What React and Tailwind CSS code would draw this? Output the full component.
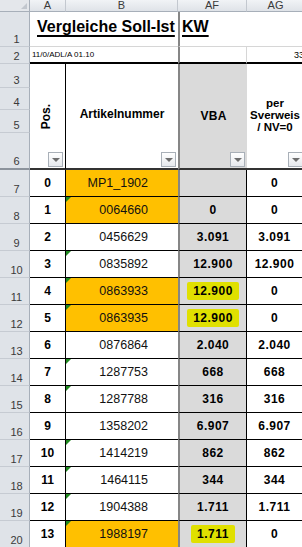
const rows = [
  { pos: '0', art: 'MP1_1902', orange: true, tri: false, vba: '', nv: '0' },
  { pos: '1', art: '0064660', orange: true, tri: true, vba: '0', nv: '0' },
  { pos: '2', art: '0456629', orange: false, tri: false, vba: '3.091', nv: '3.091' },
  { pos: '3', art: '0835892', orange: false, tri: true, vba: '12.900', nv: '12.900' },
  { pos: '4', art: '0863933', orange: true, tri: true, vba: '12.900', nv: '0', mark: true },
  { pos: '5', art: '0863935', orange: true, tri: true, vba: '12.900', nv: '0', mark: true },
  { pos: '6', art: '0876864', orange: false, tri: false, vba: '2.040', nv: '2.040' },
  { pos: '7', art: '1287753', orange: false, tri: true, vba: '668', nv: '668' },
  { pos: '8', art: '1287788', orange: false, tri: true, vba: '316', nv: '316' },
  { pos: '9', art: '1358202', orange: false, tri: false, vba: '6.907', nv: '6.907' },
  { pos: '10', art: '1414219', orange: false, tri: true, vba: '862', nv: '862' },
  { pos: '11', art: '1464115', orange: false, tri: true, vba: '344', nv: '344' },
  { pos: '12', art: '1904388', orange: false, tri: true, vba: '1.711', nv: '1.711' },
  { pos: '13', art: '1988197', orange: true, tri: true, vba: '1.711', nv: '0', mark: true },
]

const rowNums = Array.from({ length: 20 }, (_, i) => i + 1)

function Filter() {
  return (
    <span className="absolute right-[2px] bottom-[1px] w-[15px] h-[15px] border border-[#a9b0b8] bg-linear-to-b from-white to-[#e6e9ed] flex items-center justify-center">
      <span className="w-0 h-0 border-l-[4px] border-r-[4px] border-t-[4px] border-l-transparent border-r-transparent border-t-[#6e6e6e]" />
    </span>
  )
}

function ColHead({ label, className = '' }) {
  return (
    <div className={`bg-linear-to-b from-[#f1f3f6] to-[#dfe3e8] border-r border-b border-r-[#c3c8cf] border-b-[#a7afb9] flex items-center justify-center text-[11px] leading-none text-[#3a3a3a] ${className}`}>
      {label}
    </div>
  )
}

export default function App() {
  return (
    <div className="w-[302px] h-[547px] overflow-hidden bg-white font-['Liberation_Sans',Arial,sans-serif] text-black">
      <div className="grid grid-cols-[30px_36px_112px_69px_58px] grid-rows-[12px_35px_17px_24px_22px_23px_37px_repeat(14,27px)]">
        {/* corner */}
        <div className="relative col-start-1 row-start-1 bg-[#e4e7eb] border-r border-b border-r-[#a7afb9] border-b-[#a7afb9]">
          <span className="absolute right-[2px] bottom-[2px] w-0 h-0 border-l-[6px] border-b-[6px] border-l-transparent border-b-[#c2c7ce]" />
        </div>
        <ColHead label="A" className="col-start-2 row-start-1" />
        <ColHead label="B" className="col-start-3 row-start-1" />
        <ColHead label="AF" className="col-start-4 row-start-1" />
        <ColHead label="AG" className="col-start-5 row-start-1" />

        {/* row headers */}
        {rowNums.map((n) => (
          <div
            key={n}
            className={`col-start-1 bg-[#dfe3e8] border-r border-r-[#a7afb9] flex items-end justify-center pl-[4px] pb-[1px] text-[11px] leading-[12px] text-[#3a3a3a] ${
              n === 6 ? 'border-b-2 border-b-[#8c939c]' : 'border-b border-b-[#c6cbd2]'
            }`}
            style={{ gridRowStart: n + 1 }}
          >
            {n}
          </div>
        ))}

        {/* row 1 */}
        <div className="col-start-2 col-span-2 row-start-2 border-b border-b-[#d6d6d6] flex items-end pl-[7px] pb-[10px]">
          <span className="whitespace-nowrap text-[16px] leading-[18px] font-bold underline decoration-2 underline-offset-[3px]">
            Vergleiche Soll-Ist
          </span>
        </div>
        <div className="col-start-4 row-start-2 border-l-2 border-l-[#868686] border-b border-b-[#d6d6d6] flex items-end pl-[2px] pb-[10px]">
          <span className="text-[16px] leading-[18px] font-bold underline decoration-2 underline-offset-[3px]">KW</span>
        </div>
        <div className="col-start-5 row-start-2 border-b border-b-[#d6d6d6]" />

        {/* row 2 */}
        <div className="col-start-2 col-span-2 row-start-3 border-b-2 border-b-black flex items-end pl-[2px] pb-[2px]">
          <span className="whitespace-nowrap text-[8px] leading-[10px]">11/0/ADL/A 01.10</span>
        </div>
        <div className="col-start-4 row-start-3 border-l-2 border-l-[#868686] border-r border-r-[#d6d6d6] border-b-2 border-b-black" />
        <div className="col-start-5 row-start-3 border-b-2 border-b-black flex items-end justify-end pr-[1px] pb-[2px]">
          <span className="text-[9px] leading-[10px]">33</span>
        </div>

        {/* header rows 3-6 */}
        <div className="relative col-start-2 row-start-4 row-span-4 border-r border-r-black border-b-2 border-b-[#333]">
          <div className="absolute left-[9px] top-[40px] [writing-mode:vertical-rl] rotate-180 text-[12px] font-bold leading-[14px]">
            Pos.
          </div>
          <Filter />
        </div>
        <div className="relative col-start-3 row-start-4 row-span-4 border-b-2 border-b-[#333] flex items-center justify-center pb-[4px]">
          <span className="text-[12px] font-bold">Artikelnummer</span>
          <Filter />
        </div>
        <div className="relative col-start-4 row-start-4 row-span-4 bg-[#dadada] border-l-2 border-l-[#868686] border-b-2 border-b-[#333] flex items-center justify-center">
          <span className="text-[12px] font-bold tracking-[0.3px]">VBA</span>
          <Filter />
        </div>
        <div className="relative col-start-5 row-start-4 row-span-4 border-b-2 border-b-[#333] flex items-start justify-center pt-[33px] pr-[2px]">
          <span className="text-[11.5px] font-bold leading-[12px] text-center">
            per
            <br />
            Sverweis
            <br />/ NV=0
          </span>
          <Filter />
        </div>

        {/* body */}
        {rows.map((r, i) => (
          <div key={r.pos} className="contents">
            <div
              className="col-start-2 border-r border-b border-black flex items-center justify-center text-[12px] font-bold"
              style={{ gridRowStart: i + 8 }}
            >
              {r.pos}
            </div>
            <div
              className={`relative col-start-3 border-b border-black flex items-center justify-end pr-[30px] text-[12.5px] text-[#111] ${
                r.orange ? 'bg-[#ffc000]' : 'bg-white'
              }`}
              style={{ gridRowStart: i + 8 }}
            >
              {r.tri && (
                <span className="absolute left-0 top-0 w-0 h-0 border-t-[5px] border-r-[5px] border-t-[#1f8a1f] border-r-transparent" />
              )}
              {r.art}
            </div>
            <div
              className="col-start-4 bg-[#dadada] border-l-2 border-l-[#868686] border-r border-r-black border-b border-b-black flex items-center justify-center text-[12px] font-bold tracking-[0.5px]"
              style={{ gridRowStart: i + 8 }}
            >
              {r.mark ? (
                <span className="bg-[#e0e000] rounded-[2px] px-[6px] py-[2px] leading-[14px]">{r.vba}</span>
              ) : (
                r.vba
              )}
            </div>
            <div
              className="col-start-5 border-b border-black flex items-center justify-center pr-[3px] text-[12px] font-bold tracking-[0.5px]"
              style={{ gridRowStart: i + 8 }}
            >
              {r.nv}
            </div>
          </div>
        ))}
      </div>
    </div>
  )
}
